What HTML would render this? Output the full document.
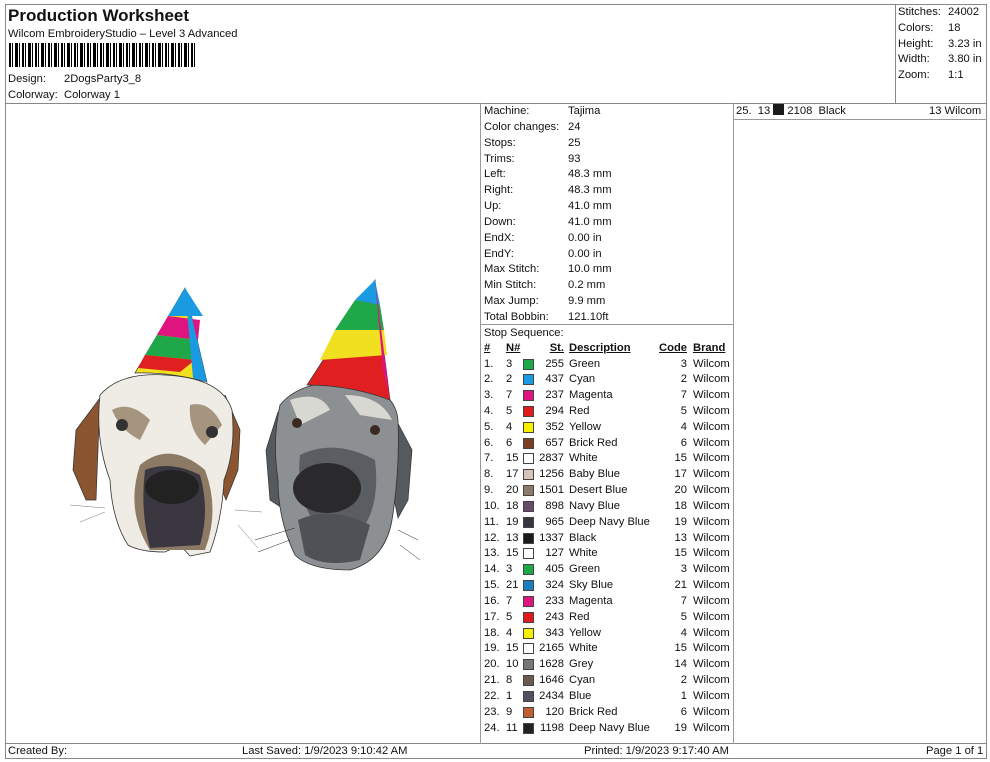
<!DOCTYPE html>
<html><head><meta charset="utf-8"><style>
*{margin:0;padding:0;box-sizing:border-box}
body{width:990px;height:762px;background:#fff;font-family:"Liberation Sans",sans-serif;font-size:11.2px;color:#111;position:relative;overflow:hidden}
.a{position:absolute;white-space:nowrap}
.ln{position:absolute;background:#888}
.r{position:absolute;left:480px;width:253px;height:15.83px;line-height:15.83px}
.r span{position:absolute}
.hd span{text-decoration:underline}
.sw{width:11px;height:11px;top:2px;left:43px;border:1px solid #444}
</style></head><body>
<div class="ln" style="left:5px;top:4px;width:982px;height:1px"></div>
<div class="ln" style="left:5px;top:758px;width:982px;height:1px"></div>
<div class="ln" style="left:5px;top:4px;width:1px;height:755px"></div>
<div class="ln" style="left:986px;top:4px;width:1px;height:755px"></div>
<div class="ln" style="left:5px;top:103px;width:982px;height:1px"></div>
<div class="ln" style="left:5px;top:743px;width:982px;height:1px"></div>
<div class="ln" style="left:895px;top:4px;width:1px;height:100px"></div>
<div class="ln" style="left:480px;top:103px;width:1px;height:641px;background:#999"></div>
<div class="ln" style="left:733px;top:103px;width:1px;height:641px;background:#999"></div>
<div class="ln" style="left:480px;top:324px;width:254px;height:1px;background:#999"></div>
<div class="ln" style="left:733px;top:119px;width:254px;height:1px;background:#999"></div>

<div class="a" style="left:8px;top:6px;font-size:17px;font-weight:bold">Production Worksheet</div>
<div class="a" style="left:8px;top:28px">Wilcom EmbroideryStudio – Level 3 Advanced</div>
<div class="a" style="left:9px;top:43px;width:186px;height:24px;background:repeating-linear-gradient(90deg,#000 0 2px,#fff 2px 3px,#000 3px 4px,#fff 4px 6px,#000 6px 9px,#fff 9px 10px,#000 10px 11px,#fff 11px 13px)"></div>
<div class="a" style="left:8px;top:73px">Design:</div><div class="a" style="left:64px;top:73px">2DogsParty3_8</div>
<div class="a" style="left:8px;top:89px">Colorway:</div><div class="a" style="left:64px;top:89px">Colorway 1</div>

<div class="a" style="left:898px;top:5px;line-height:15.8px">Stitches:<br>Colors:<br>Height:<br>Width:<br>Zoom:</div>
<div class="a" style="left:948px;top:5px;line-height:15.8px">24002<br>18<br>3.23 in<br>3.80 in<br>1:1</div>

<div class="a" style="left:484px;top:104px;line-height:15.85px">Machine:<br>Color changes:<br>Stops:<br>Trims:<br>Left:<br>Right:<br>Up:<br>Down:<br>EndX:<br>EndY:<br>Max Stitch:<br>Min Stitch:<br>Max Jump:<br>Total Bobbin:<br>Stop Sequence:</div>
<div class="a" style="left:568px;top:104px;line-height:15.85px">Tajima<br>24<br>25<br>93<br>48.3 mm<br>48.3 mm<br>41.0 mm<br>41.0 mm<br>0.00 in<br>0.00 in<br>10.0 mm<br>0.2 mm<br>9.9 mm<br>121.10ft</div>

<div class="r hd" style="top:341px;font-weight:bold"><span style="left:4px">#</span><span style="left:26px">N#</span><span style="right:169px">St.</span><span style="left:89px">Description</span><span style="right:46px">Code</span><span style="left:213px">Brand</span></div>

<div id="rows"></div>
<div class="a" style="left:736px;top:104px;line-height:15.8px">25.&nbsp; 13 <span style="display:inline-block;width:11px;height:11px;background:#1a1a1a;vertical-align:-1px"></span> 2108&nbsp; Black</div>
<div class="a" style="left:929px;top:104px;line-height:15.8px">13 Wilcom</div>

<div class="a" style="left:8px;top:745px">Created By:</div>
<div class="a" style="left:242px;top:745px">Last Saved: 1/9/2023 9:10:42 AM</div>
<div class="a" style="left:584px;top:745px">Printed: 1/9/2023 9:17:40 AM</div>
<div class="a" style="left:926px;top:745px">Page 1 of 1</div>

<svg class="a" style="left:0;top:0" width="480" height="740">
<path d="M100 398 L76 430 L73 470 L86 500 L96 500 Z" fill="#8a5530" stroke="#333" stroke-width=".7"/>
<path d="M225 395 L240 430 L238 470 L226 500 L218 480 Z" fill="#8a5530" stroke="#333" stroke-width=".7"/>
<path d="M100 395 Q120 372 165 375 Q222 378 232 410 Q236 450 224 480 Q222 520 210 552 L190 556 L180 545 L165 552 Q140 552 128 545 Q112 520 110 480 Q95 440 100 395 Z" fill="#eeece4" stroke="#333" stroke-width=".8"/>
<path d="M140 465 Q170 440 205 470 Q220 510 205 550 L150 550 Q125 510 140 465Z" fill="#8d7a64"/>
<path d="M145 470 Q170 460 200 475 Q210 510 200 545 L150 548 Q140 510 145 470Z" fill="#3a3740"/>
<ellipse cx="172" cy="487" rx="27" ry="17" fill="#222"/>
<path d="M112 410 Q130 400 150 420 L140 440 Q120 430 112 410Z M190 405 Q210 400 222 425 L205 445 Q188 430 190 405Z" fill="#a5957f"/>
<circle cx="122" cy="425" r="6" fill="#333"/><circle cx="212" cy="432" r="6" fill="#333"/>
<path d="M185 288 L135 373 Q170 372 207 382 Z" fill="#f0e020" stroke="#333" stroke-width=".7"/>
<path d="M185 288 L168 316 L203 316 Z" fill="#1a9ae0"/>
<path d="M168 316 L157 335 L198 340 L200 320 Z" fill="#e0147f"/>
<path d="M157 335 L145 355 L195 360 L198 340 Z" fill="#1fa84a"/>
<path d="M145 355 L138 368 L180 372 L195 360 Z" fill="#e02020"/>
<path d="M185 288 L207 382 L193 378 Z" fill="#1a9ae0"/>
<path d="M278 412 L266 450 L270 500 L285 510 Z" fill="#555a5e" stroke="#333" stroke-width=".7"/>
<path d="M392 412 L412 450 L408 500 L398 518 L388 470 Z" fill="#555a5e" stroke="#333" stroke-width=".7"/>
<path d="M280 405 Q300 380 350 382 Q395 388 398 420 Q400 470 392 520 Q385 560 350 570 Q310 570 295 555 Q278 520 278 480 Q272 440 280 405Z" fill="#8d9092" stroke="#333" stroke-width=".8"/>
<path d="M300 455 Q335 438 375 460 Q380 500 365 525 L320 530 Q295 500 300 455Z" fill="#5a5d62"/>
<ellipse cx="327" cy="488" rx="34" ry="25" fill="#2a2a2c"/>
<path d="M298 520 Q330 505 370 525 L360 560 Q325 568 305 555Z" fill="#4e5155"/>
<path d="M290 400 Q320 390 330 410 L300 425Z M345 395 Q380 395 392 420 L360 415Z" fill="#d8d8d2"/>
<circle cx="297" cy="423" r="5" fill="#3a2a22"/><circle cx="375" cy="430" r="5" fill="#3a2a22"/>
<path d="M375 280 L307 385 Q350 385 390 400 Z" fill="#e02020" stroke="#333" stroke-width=".7"/>
<path d="M375 280 L355 300 L380 305 Z" fill="#1a9ae0"/>
<path d="M355 300 L335 330 L384 330 L380 305 Z" fill="#1fa84a"/>
<path d="M335 330 L320 360 L387 355 L384 330 Z" fill="#f0e020"/>
<path d="M375 280 L390 400 L383 370 Z" fill="#e0147f"/>
<g stroke="#777" stroke-width=".5" fill="none"><path d="M70 505 L105 508 M80 522 L105 512 M235 510 L262 512 M238 525 L258 548"/><path d="M255 540 L295 528 M258 552 L290 540 M400 545 L420 560 M398 530 L418 540" stroke="#222"/></g>
</svg>

<script>
var d=[["1.","3","#1fa84a","255","Green","3"],["2.","2","#1a9ae0","437","Cyan","2"],["3.","7","#e0147f","237","Magenta","7"],["4.","5","#e01b1b","294","Red","5"],["5.","4","#f5f000","352","Yellow","4"],["6.","6","#7a3e22","657","Brick Red","6"],["7.","15","#fff","2837","White","15"],["8.","17","#d8c3b8","1256","Baby Blue","17"],["9.","20","#8c7a6a","1501","Desert Blue","20"],["10.","18","#6a4a6a","898","Navy Blue","18"],["11.","19","#3a3440","965","Deep Navy Blue","19"],["12.","13","#1a1a1a","1337","Black","13"],["13.","15","#fff","127","White","15"],["14.","3","#1fa84a","405","Green","3"],["15.","21","#1a7fc0","324","Sky Blue","21"],["16.","7","#e0147f","233","Magenta","7"],["17.","5","#e01b1b","243","Red","5"],["18.","4","#f5f000","343","Yellow","4"],["19.","15","#fff","2165","White","15"],["20.","10","#777","1628","Grey","14"],["21.","8","#6b5a50","1646","Cyan","2"],["22.","1","#505060","2434","Blue","1"],["23.","9","#c06030","120","Brick Red","6"],["24.","11","#222","1198","Deep Navy Blue","19"]];
var h="";d.forEach(function(r,i){h+='<div class="r" style="top:'+(356.5+i*15.83)+'px"><span style="left:4px">'+r[0]+'</span><span style="left:26px">'+r[1]+'</span><span class="sw" style="background:'+r[2]+'"></span><span style="right:169px">'+r[3]+'</span><span style="left:89px">'+r[4]+'</span><span style="right:46px">'+r[5]+'</span><span style="left:213px">Wilcom</span></div>'});
document.getElementById("rows").innerHTML=h;
</script>
</body></html>
